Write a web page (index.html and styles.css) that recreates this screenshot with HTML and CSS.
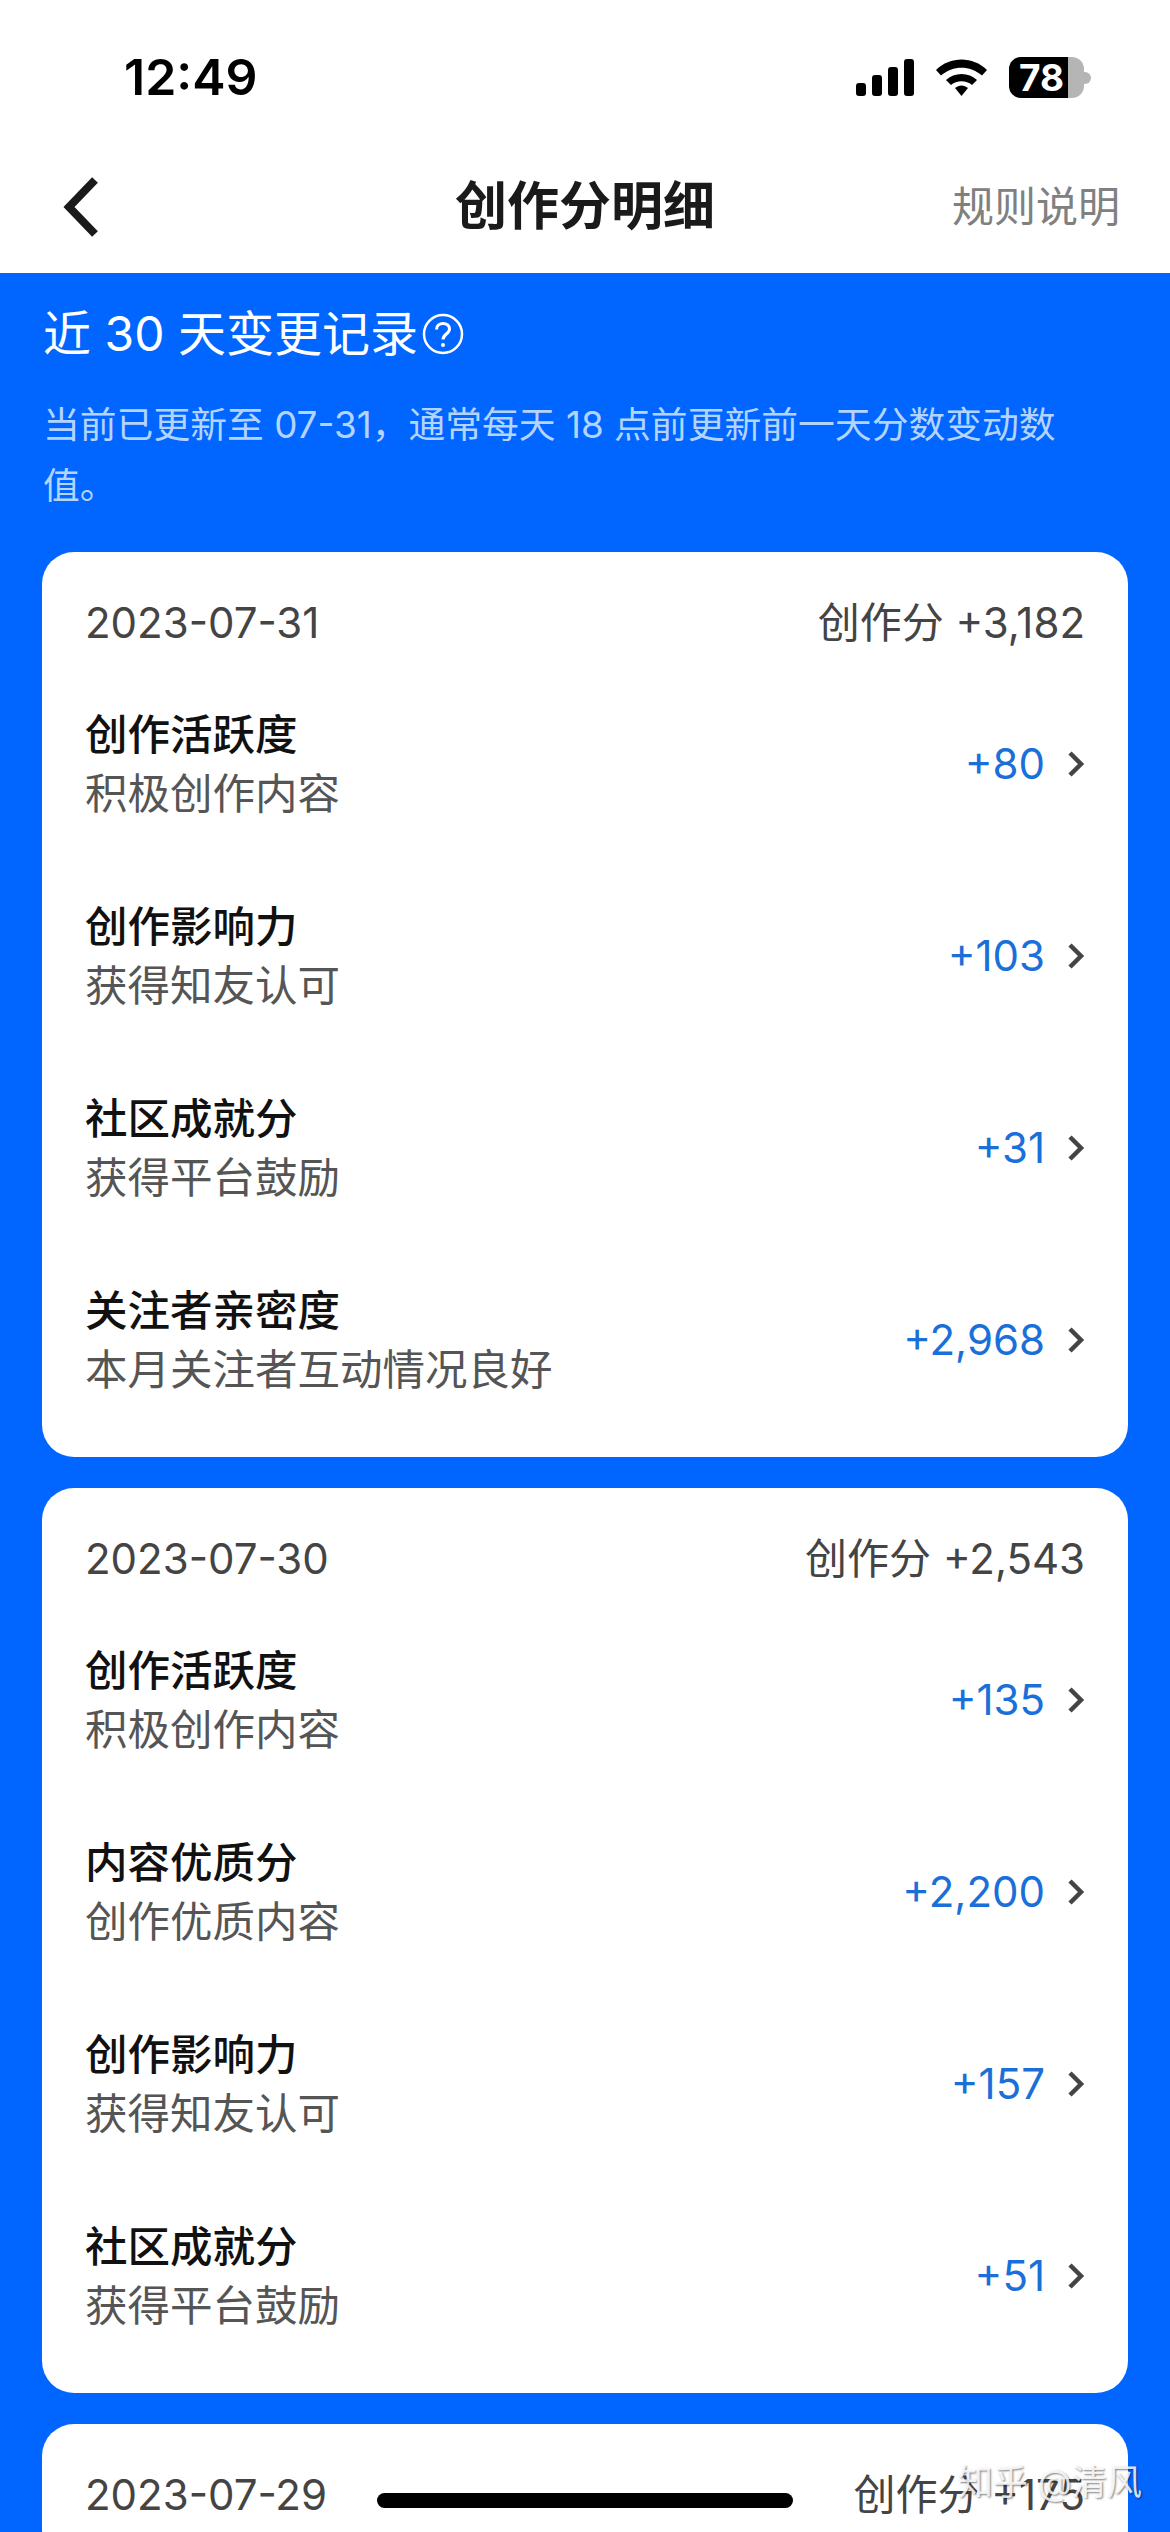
FILE: index.html
```html
<!DOCTYPE html>
<html lang="zh">
<head>
    <meta charset="UTF-8">
    <meta name="viewport" content="width=device-width, initial-scale=1.0">
    <title>创作分明细</title>
    <link rel="stylesheet" href="styles.css">
</head>
<body>
    <div class="page">
        <div class="status-bar">
            <span class="time">12:49</span>
            <div class="status-icons">
                <svg class="signal" width="58" height="37" viewBox="0 0 58 37">
                    <rect x="0" y="24" width="10" height="13" rx="3"/>
                    <rect x="16" y="16" width="10" height="21" rx="3"/>
                    <rect x="32" y="8" width="10" height="29" rx="3"/>
                    <rect x="48" y="0" width="10" height="37" rx="3"/>
                </svg>
                <svg class="wifi" width="51" height="37" viewBox="0 0 51 37">
                    <path d="M0 11 C14 -3 37 -3 51 11 L46 16.500 C34 6 17 6 5 16.500 Z"/>
                    <path d="M10 21 C18 13 33 13 41 21 L36 26 C30 21 21 21 15 26 Z"/>
                    <path d="M19 29 C23 25.500 28 25.500 32 29 L25.500 37 Z"/>
                </svg>
                <div class="battery">
                    <div class="battery-body"><span class="battery-num">78</span></div>
                    <div class="battery-nub"></div>
                </div>
            </div>
        </div>

        <header class="nav">
            <svg class="back" width="36" height="60" viewBox="0 0 36 60">
                <path d="M32 3 L6 30 L32 57" fill="none" stroke="#1a1a1a" stroke-width="8"/>
            </svg>
            <h1 class="nav-title">创作分明细</h1>
            <span class="nav-link">规则说明</span>
        </header>

        <main class="content">
            <div class="intro-title">
                <span>近 30 天变更记录</span>
                <svg class="help" width="42" height="42" viewBox="0 0 42 42">
                    <circle cx="21" cy="21" r="19" fill="none" stroke="#fff" stroke-width="2.500"/>
                    <path d="M14.500 16.500 C14.500 8.500 27.500 8.500 27.500 16 C27.500 21 21 21 21 26.500" fill="none" stroke="#fff" stroke-width="3"/>
                    <circle cx="21" cy="32" r="2" fill="#fff"/>
                </svg>
            </div>
            <p class="intro-desc">当前已更新至 07-31，通常每天 18 点前更新前一天分数变动数值。</p>

            <section class="card">
                <div class="card-head"><span>2023-07-31</span><span>创作分 +3,182</span></div>
                <div class="row">
                    <div><div class="row-title">创作活跃度</div><div class="row-sub">积极创作内容</div></div>
                    <div class="row-right"><span class="score">+80</span><svg class="chevron" width="18" height="28" viewBox="0 0 18 28"><path d="M3 3 L14 14 L3 25"/></svg></div>
                </div>
                <div class="row">
                    <div><div class="row-title">创作影响力</div><div class="row-sub">获得知友认可</div></div>
                    <div class="row-right"><span class="score">+103</span><svg class="chevron" width="18" height="28" viewBox="0 0 18 28"><path d="M3 3 L14 14 L3 25"/></svg></div>
                </div>
                <div class="row">
                    <div><div class="row-title">社区成就分</div><div class="row-sub">获得平台鼓励</div></div>
                    <div class="row-right"><span class="score">+31</span><svg class="chevron" width="18" height="28" viewBox="0 0 18 28"><path d="M3 3 L14 14 L3 25"/></svg></div>
                </div>
                <div class="row">
                    <div><div class="row-title">关注者亲密度</div><div class="row-sub">本月关注者互动情况良好</div></div>
                    <div class="row-right"><span class="score">+2,968</span><svg class="chevron" width="18" height="28" viewBox="0 0 18 28"><path d="M3 3 L14 14 L3 25"/></svg></div>
                </div>
            </section>

            <section class="card">
                <div class="card-head"><span>2023-07-30</span><span>创作分 +2,543</span></div>
                <div class="row">
                    <div><div class="row-title">创作活跃度</div><div class="row-sub">积极创作内容</div></div>
                    <div class="row-right"><span class="score">+135</span><svg class="chevron" width="18" height="28" viewBox="0 0 18 28"><path d="M3 3 L14 14 L3 25"/></svg></div>
                </div>
                <div class="row">
                    <div><div class="row-title">内容优质分</div><div class="row-sub">创作优质内容</div></div>
                    <div class="row-right"><span class="score">+2,200</span><svg class="chevron" width="18" height="28" viewBox="0 0 18 28"><path d="M3 3 L14 14 L3 25"/></svg></div>
                </div>
                <div class="row">
                    <div><div class="row-title">创作影响力</div><div class="row-sub">获得知友认可</div></div>
                    <div class="row-right"><span class="score">+157</span><svg class="chevron" width="18" height="28" viewBox="0 0 18 28"><path d="M3 3 L14 14 L3 25"/></svg></div>
                </div>
                <div class="row">
                    <div><div class="row-title">社区成就分</div><div class="row-sub">获得平台鼓励</div></div>
                    <div class="row-right"><span class="score">+51</span><svg class="chevron" width="18" height="28" viewBox="0 0 18 28"><path d="M3 3 L14 14 L3 25"/></svg></div>
                </div>
            </section>

            <section class="card">
                <div class="card-head"><span>2023-07-29</span><span>创作分 +175</span></div>
            </section>
        </main>

        <div class="home-bar"></div>
        <div class="watermark">知乎 @清风</div>
    </div>
</body>
</html>
```

FILE: styles.css
```css
html, body {
    margin: 0;
    padding: 0;
}
body {
    font-family: Inter, "Noto Sans CJK SC", sans-serif;
    background-color: #0066ff;
}
.page {
    position: relative;
    width: 1170px;
    height: 2532px;
    overflow: hidden;
}
.status-bar {
    height: 140px;
    background-color: #fff;
    display: flex;
    justify-content: space-between;
    align-items: flex-start;
    box-sizing: border-box;
    padding: 46px 79px 0 124px;
}
.time {
    font-size: 50px;
    font-weight: 600;
    line-height: 62px;
    color: #000;
}
.status-icons {
    display: flex;
    align-items: center;
    margin-top: 11px;
}
.signal {
    margin-right: 22px;
}
.wifi {
    margin-right: 22px;
}
.battery {
    display: flex;
    align-items: center;
}
.battery-body {
    width: 75px;
    height: 41px;
    border-radius: 12px;
    box-sizing: border-box;
    padding-left: 10px;
    background: linear-gradient(to right, #000 59px, #b5b5b5 59px);
    display: flex;
    align-items: center;
}
.battery-num {
    font-size: 37px;
    font-weight: 700;
    line-height: 41px;
    color: #fff;
}
.battery-nub {
    width: 7px;
    height: 12px;
    background-color: #b5b5b5;
    border-radius: 0 6px 6px 0;
}
.nav {
    height: 133px;
    background-color: #fff;
    position: relative;
    display: flex;
    justify-content: space-between;
    align-items: center;
    box-sizing: border-box;
    padding: 0 50px 0 63px;
}
.nav-title {
    position: absolute;
    left: 0;
    right: 0;
    top: 32px;
    margin: 0;
    font-size: 52px;
    font-weight: 700;
    line-height: 70px;
    text-align: center;
    color: #1a1a1a;
}
.nav-link {
    font-size: 42px;
    color: #808080;
    line-height: 60px;
}
.content {
    padding: 0 42px;
}
.intro-title {
    display: flex;
    align-items: center;
    gap: 4px;
    padding: 30px 0 0 1px;
    height: 62px;
    font-size: 48px;
    line-height: 62px;
    color: #fff;
}
.intro-desc {
    margin: 29px 0 0 1px;
    width: 1050px;
    font-size: 36.800px;
    line-height: 61px;
    color: #b3d4ff;
}
.card {
    background-color: #fff;
    border-radius: 32px;
    margin-top: 31px;
    padding: 42px 43px 21px;
}
.intro-desc + .card {
    margin-top: 36px;
}
.card-head {
    display: flex;
    justify-content: space-between;
    height: 58px;
    margin-bottom: 16px;
    font-size: 42px;
    line-height: 58px;
    color: #444;
}
.row {
    height: 192px;
    display: flex;
    justify-content: space-between;
    align-items: center;
}
.row-title {
    font-size: 42.500px;
    font-weight: 500;
    line-height: 59px;
    color: #111;
}
.row-sub {
    font-size: 42.500px;
    line-height: 59px;
    color: #555;
}
.row-right {
    display: flex;
    align-items: center;
}
.score {
    font-size: 42px;
    line-height: 60px;
    color: #1a6fd8;
}
.chevron {
    margin-left: 22px;
    fill: none;
    stroke: #444;
    stroke-width: 4.500;
}
.home-bar {
    position: absolute;
    left: 377px;
    top: 2493px;
    width: 416px;
    height: 15px;
    border-radius: 8px;
    background-color: #000;
}
.watermark {
    position: absolute;
    left: 958px;
    top: 2460px;
    font-size: 35px;
    line-height: 44px;
    color: rgba(255, 255, 255, 0.85);
    text-shadow: 1px 1px 2px rgba(0, 0, 0, 0.5);
}
```
